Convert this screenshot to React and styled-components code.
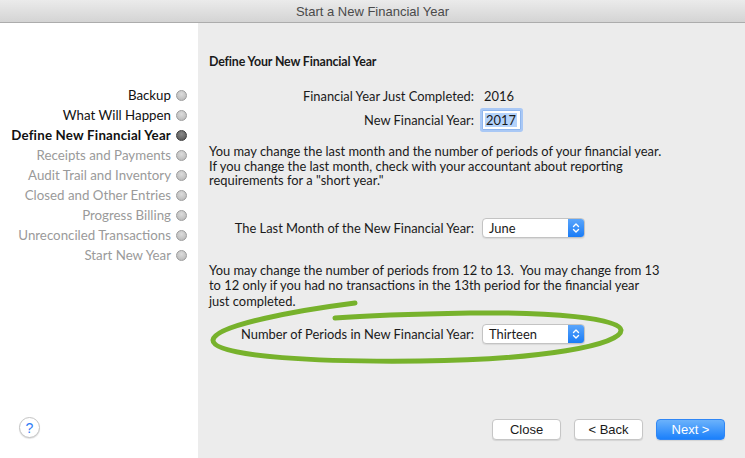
import React from 'react';
import styled, { createGlobalStyle } from 'styled-components';

const GlobalStyle = createGlobalStyle`
  html, body {
    margin: 0;
    padding: 0;
    background: #ececec;
  }
  * {
    box-sizing: border-box;
  }
`;

const Window = styled.div`
  width: 745px;
  height: 458px;
  display: flex;
  flex-direction: column;
  overflow: hidden;
  font-family: Lato, 'Noto Sans', sans-serif;
  font-size: 12.9px;
  color: #1a1a1a;
`;

const TitleBar = styled.div`
  height: 23px;
  flex: none;
  display: flex;
  align-items: center;
  justify-content: center;
  background: linear-gradient(#ebebeb, #d4d4d4);
  border-bottom: 1px solid #acacac;
  font-family: 'Liberation Sans', Arial, sans-serif;
  font-size: 13px;
  color: #4a4a4a;
`;

const Body = styled.div`
  flex: 1;
  display: flex;
  min-height: 0;
`;

const Sidebar = styled.div`
  width: 198px;
  flex: none;
  background: #ffffff;
  display: flex;
  flex-direction: column;
  padding: 62px 0 20px 19px;
`;

const StepList = styled.div`
  display: flex;
  flex-direction: column;
  align-items: flex-end;
  padding-right: 11px;
`;

const Step = styled.div`
  height: 20px;
  display: flex;
  align-items: center;
  gap: 5px;
  white-space: nowrap;
  font-size: 13.3px;
  font-weight: ${(p) => (p.current ? 700 : 400)};
  letter-spacing: ${(p) => (p.current ? '0.2px' : '0')};
  color: ${(p) => (p.state === 'todo' ? '#9a9a9a' : '#111')};
`;

const Dot = styled.span`
  width: 11px;
  height: 11px;
  border-radius: 50%;
  flex: none;
  border: 1px solid ${(p) => (p.current ? '#3f3f3f' : '#9d9d9d')};
  background: ${(p) =>
    p.current
      ? 'radial-gradient(circle at 50% 35%, #8a8a8a, #525252)'
      : 'radial-gradient(circle at 50% 35%, #dcdcdc, #b4b4b4)'};
`;

const HelpButton = styled.div`
  margin-top: auto;
  width: 21px;
  height: 21px;
  border-radius: 50%;
  background: #fff;
  border: 1px solid #c4c4c4;
  box-shadow: 0 1px 1px rgba(0, 0, 0, 0.12);
  display: flex;
  align-items: center;
  justify-content: center;
  font-family: 'Liberation Sans', Arial, sans-serif;
  font-size: 14px;
  color: #2f7cf6;
`;

const Main = styled.div`
  flex: 1;
  position: relative;
  display: flex;
  flex-direction: column;
  padding: 31px 20px 18px 11px;
  background: #ececec;
`;

const Heading = styled.div`
  font-weight: 700;
  font-size: 12.4px;
  letter-spacing: -0.15px;
  line-height: 15px;
`;

const Row = styled.div`
  display: grid;
  grid-template-columns: 265px auto;
  column-gap: ${(p) => p.gap || 8}px;
  align-items: center;
  height: 20px;
  margin-top: ${(p) => p.top}px;
`;

const Label = styled.span`
  text-align: right;
  white-space: nowrap;
`;

const Value = styled.span`
  padding-left: 2px;
`;

const YearInput = styled.div`
  width: 39px;
  height: 20px;
  background: #fff;
  border: 1px solid #8fb6ee;
  box-shadow: 0 0 0 2px #a9c8f5;
  border-radius: 1px;
  padding: 2px 2px;
  display: flex;
  align-items: center;
`;

const Selected = styled.span`
  background: #b4d3fb;
  line-height: 14px;
  padding: 0 1px;
`;

const Paragraph = styled.p`
  margin: ${(p) => p.top}px 0 0 0;
  line-height: ${(p) => p.lh}px;
  white-space: pre;
`;

const Select = styled.div`
  width: 103px;
  height: 20px;
  display: flex;
  background: #fff;
  border: 1px solid #c3c3c3;
  border-radius: 4px;
  box-shadow: 0 1px 1px rgba(0, 0, 0, 0.08);
  overflow: hidden;
`;

const SelectText = styled.span`
  flex: 1;
  padding-left: 6px;
  display: flex;
  align-items: center;
`;

const SelectArrows = styled.span`
  width: 16px;
  flex: none;
  display: flex;
  align-items: center;
  justify-content: center;
  background: linear-gradient(#5aa5fb, #1b7cf6);
`;

const Footer = styled.div`
  margin-top: auto;
  display: flex;
  justify-content: flex-end;
  gap: 13px;
`;

const Button = styled.div`
  width: 69px;
  height: 21px;
  display: flex;
  align-items: center;
  justify-content: center;
  border-radius: 4px;
  font-family: 'Liberation Sans', Arial, sans-serif;
  font-size: 13px;
  color: ${(p) => (p.primary ? '#fff' : '#1a1a1a')};
  background: ${(p) =>
    p.primary ? 'linear-gradient(#6bb2fb, #1b80fb)' : '#fff'};
  border: 1px solid ${(p) => (p.primary ? '#2f86f5' : '#c6c6c6')};
  box-shadow: 0 1px 1px rgba(0, 0, 0, 0.1);
`;

const Swoosh = styled.svg`
  position: absolute;
  left: 12px;
  top: 277px;
  pointer-events: none;
`;

const steps = [
  ['Backup', 'done'],
  ['What Will Happen', 'done'],
  ['Define New Financial Year', 'current'],
  ['Receipts and Payments', 'todo'],
  ['Audit Trail and Inventory', 'todo'],
  ['Closed and Other Entries', 'todo'],
  ['Progress Billing', 'todo'],
  ['Unreconciled Transactions', 'todo'],
  ['Start New Year', 'todo'],
];

function Arrows() {
  return (
    <svg width="8" height="12" viewBox="0 0 8 12">
      <path d="M1.5 4.5 L4 2 L6.5 4.5 M1.5 7.5 L4 10 L6.5 7.5" fill="none" stroke="#fff" strokeWidth="1.4" strokeLinecap="round" strokeLinejoin="round" />
    </svg>
  );
}

function Dropdown({ value }) {
  return (
    <Select>
      <SelectText>{value}</SelectText>
      <SelectArrows>
        <Arrows />
      </SelectArrows>
    </Select>
  );
}

export default function App() {
  return (
    <Window>
      <GlobalStyle />
      <TitleBar>Start a New Financial Year</TitleBar>
      <Body>
        <Sidebar>
          <StepList>
            {steps.map(([name, state]) => (
              <Step key={name} state={state} current={state === 'current'}>
                {name}
                <Dot current={state === 'current'} />
              </Step>
            ))}
          </StepList>
          <HelpButton>?</HelpButton>
        </Sidebar>
        <Main>
          <Heading>Define Your New Financial Year</Heading>
          <Row top={17} gap={8}>
            <Label>Financial Year Just Completed:</Label>
            <Value>2016</Value>
          </Row>
          <Row top={4}>
            <Label>New Financial Year:</Label>
            <YearInput>
              <Selected>2017</Selected>
            </YearInput>
          </Row>
          <Paragraph top={14} lh={14.5}>
            {'You may change the last month and the number of periods of your financial year.\nIf you change the last month, check with your accountant about reporting\nrequirements for a "short year."'}
          </Paragraph>
          <Row top={30}>
            <Label>The Last Month of the New Financial Year:</Label>
            <Dropdown value="June" />
          </Row>
          <Paragraph top={25} lh={15.5}>
            {'You may change the number of periods from 12 to 13.  You may change from 13\nto 12 only if you had no transactions in the 13th period for the financial year\njust completed.'}
          </Paragraph>
          <Row top={15}>
            <Label>Number of Periods in New Financial Year:</Label>
            <Dropdown value="Thirteen" />
          </Row>
          <Footer>
            <Button>Close</Button>
            <Button>&lt; Back</Button>
            <Button primary>Next &gt;</Button>
          </Footer>
          <Swoosh width="416" height="66" viewBox="0 0 416 66">
            <path
              d="M145 3 C90 10 5 25 3 40 C2 58 120 62 210 61 C330 60 412 45 411 30 C410 18 340 12 260 13 C200 14 150 16 125 18"
              fill="none"
              stroke="#77b22c"
              strokeWidth="5"
              strokeLinecap="round"
            />
          </Swoosh>
        </Main>
      </Body>
    </Window>
  );
}
